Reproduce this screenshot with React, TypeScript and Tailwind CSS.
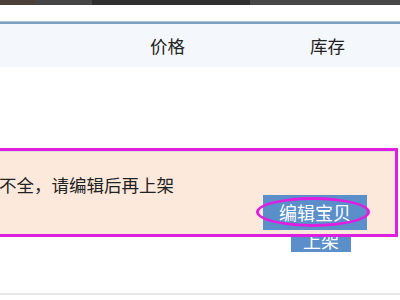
const font = { fontFamily: '"Noto Sans CJK SC", "Noto Sans", sans-serif' };

export default function App() {
  return (
    <div className="h-[300px] w-[400px] overflow-hidden bg-white text-[#222]" style={font}>
      {/* dark strip at the very top */}
      <div className="flex h-[5px]">
        <div className="w-[35px] bg-[#4b4039]" />
        <div className="w-[57px] bg-[#454545]" />
        <div className="w-[158px] bg-[#2f2f2f]" />
        <div className="flex-1 bg-[#474747]" />
      </div>
      <div className="h-[16px] bg-white" />

      {/* table header */}
      <div className="h-px bg-[#aac6dc]" />
      <div className="h-[2px] bg-[#7f9dc0]" />
      <div className="flex h-[43px] items-center bg-[#f4f7fb] text-[17.5px] leading-none">
        <div className="w-[150px]" />
        <span className="w-[36px]">价格</span>
        <div className="w-[124px]" />
        <span className="w-[36px]">库存</span>
      </div>

      <div className="h-[81px]" />

      {/* notice box */}
      <div className="relative z-10 -ml-[4px] w-[402px] border-[3px] border-[#e01ee0] bg-[#fde9dc]">
        <div className="h-px bg-[#dcdcdc]" />
        <div className="pt-[23px] text-[17.5px] leading-[20px]">不全，请编辑后再上架</div>
        <div className="flex justify-end pb-[4px] pr-[28px]">
          <div className="relative flex h-[35px] w-[104px] items-center justify-center bg-[#5a8fca] text-[18px] text-white">
            编辑宝贝
            <span className="absolute -left-[7px] -right-[3px] top-[2px] bottom-[3px] rounded-[50%] border-[3px] border-[#e01ee0]" />
          </div>
        </div>
      </div>

      <div className="flex justify-end pr-[49px]">
        <div className="-mt-[10px] flex h-[25px] w-[60px] items-center justify-center bg-[#5a8fca] text-[18px] leading-none text-white">
          上架
        </div>
      </div>

      <div className="h-[41px]" />
      <div className="h-[2px] bg-[#e6e6e6]" />
    </div>
  );
}
